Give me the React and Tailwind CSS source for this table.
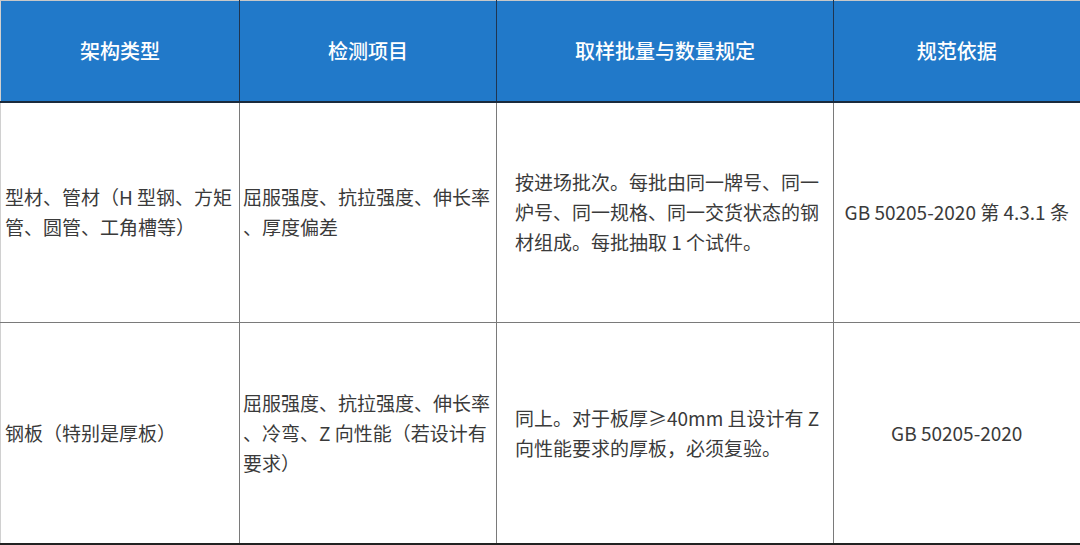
import React from "react";

const rows = [
  {
    type: "型材、管材（H 型钢、方矩管、圆管、工角槽等）",
    items: "屈服强度、抗拉强度、伸长率、厚度偏差",
    rule: "按进场批次。每批由同一牌号、同一炉号、同一规格、同一交货状态的钢材组成。每批抽取 1 个试件。",
    basis: "GB 50205-2020 第 4.3.1 条",
  },
  {
    type: "钢板（特别是厚板）",
    items: "屈服强度、抗拉强度、伸长率、冷弯、Z 向性能（若设计有要求）",
    rule: "同上。对于板厚≥40mm 且设计有 Z 向性能要求的厚板，必须复验。",
    basis: "GB 50205-2020",
  },
];

const headers = ["架构类型", "检测项目", "取样批量与数量规定", "规范依据"];

export default function App() {
  return (
    <div
      className="w-[1080px] h-[545px] bg-white overflow-hidden"
      style={{ fontFamily: '"Noto Sans CJK SC", "Noto Sans", sans-serif' }}
    >
      <table className="w-[1080px] h-[545px] border-collapse table-fixed border-t border-l border-t-[#c8c8c8] border-l-[#d0d0d0]">
        <colgroup>
          <col className="w-[239px]" />
          <col className="w-[257px]" />
          <col className="w-[337px]" />
          <col className="w-[247px]" />
        </colgroup>
        <thead>
          <tr className="h-[101px] bg-[#2179c9] border-b-2 border-b-[#1b2a3c]">
            {headers.map((h, i) => (
              <th
                key={i}
                className={`text-white text-[20px] font-medium text-center align-middle ${
                  i < 3 ? "border-r border-r-[#1f3550]" : "border-r-2 border-r-[#1b2a3c]"
                }`}
              >
                {h}
              </th>
            ))}
          </tr>
        </thead>
        <tbody>
          {rows.map((r, i) => (
            <tr
              key={i}
              className={`h-[221px] ${i === 0 ? "border-b border-b-[#7a7a7a]" : "border-b-2 border-b-[#222]"}`}
            >
              <td className="border-r border-r-[#7a7a7a] pl-[4px] pr-[4px] align-middle text-[19px] leading-[30px] text-[#3a3a3a]">
                {r.type}
              </td>
              <td className="border-r border-r-[#7a7a7a] pl-[3px] pr-[2px] align-middle text-[19px] leading-[30px] text-[#3a3a3a] [line-break:anywhere]">
                {r.items}
              </td>
              <td className="border-r border-r-[#7a7a7a] pl-[18px] pr-[12px] align-middle text-[19px] leading-[30px] text-[#3a3a3a]">
                {r.rule}
              </td>
              <td className="border-r-2 border-r-[#222] px-2 text-center align-middle text-[19px] leading-[30px] text-[#3a3a3a]">
                {r.basis}
              </td>
            </tr>
          ))}
        </tbody>
      </table>
    </div>
  );
}
